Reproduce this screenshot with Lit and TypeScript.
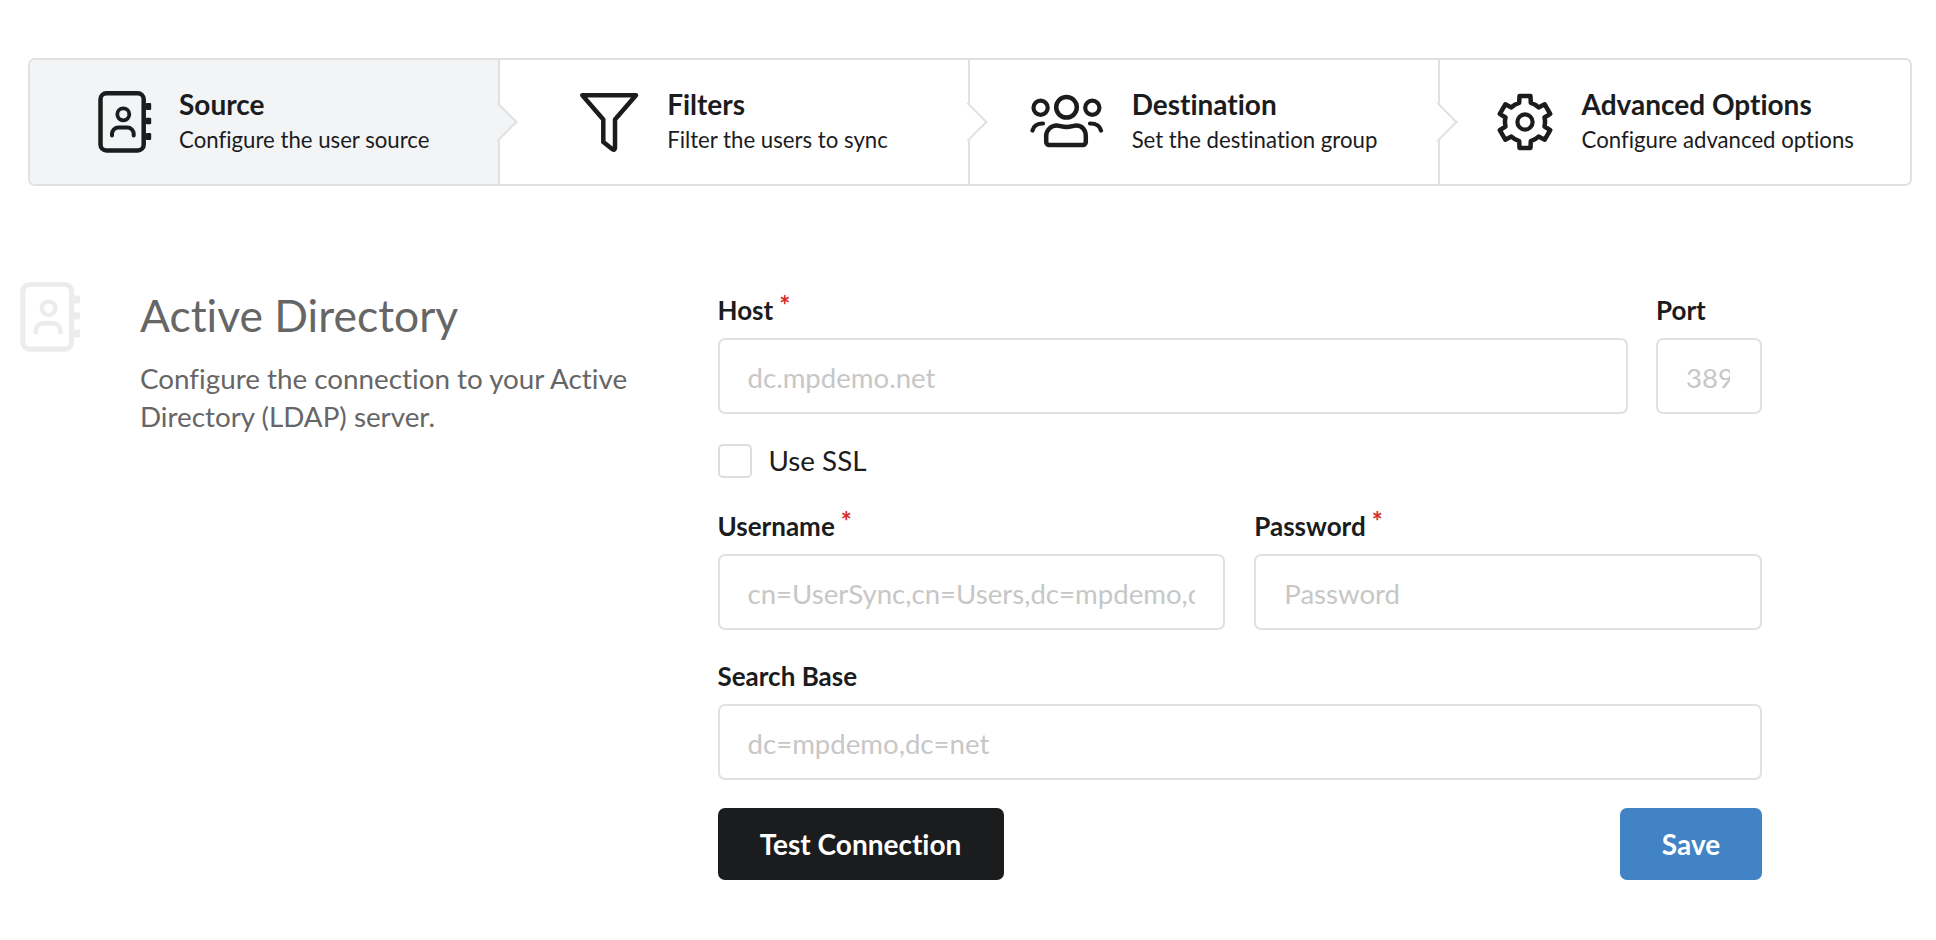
import { LitElement, html, css, svg } from "lit";
import { customElement } from "lit/decorators.js";

const gearPath = (() => {
  const cx = 29, cy = 30, R = 26.5, r = 20;
  const pts: string[] = [];
  for (let i = 0; i < 6; i++) {
    const a = -90 + i * 60;
    const p = (rad: number, deg: number) => {
      const t = (deg * Math.PI) / 180;
      return `${(cx + rad * Math.cos(t)).toFixed(1)} ${(cy + rad * Math.sin(t)).toFixed(1)}`;
    };
    pts.push(`${i === 0 ? "M" : "L"}${p(r, a - 17)}`, `L${p(R, a - 12)}`, `L${p(R, a + 12)}`, `L${p(r, a + 17)}`);
    pts.push(`A${r} ${r} 0 0 1 ${p(r, a + 43)}`);
  }
  return pts.join(" ") + " Z";
})();

const bookIcon = svg`
  <rect x="2.5" y="2.25" width="43.2" height="57.2" rx="6"/>
  <circle cx="25.3" cy="23.3" r="6" stroke-width="3.8"/>
  <path d="M14 44.5V43a6.5 6.5 0 0 1 6.5-6.5h8.7a6.5 6.5 0 0 1 6.5 6.5v1.5" stroke-width="4"/>
  <path d="M49 13.2h3v4.6h-3zM49 28h3v4h-3zM49 43.2h3v4.6h-3z" fill="currentColor" stroke-width="2.4"/>`;
const filterIcon = svg`<path d="M3.3 3.3H57L36 27.5V55Q36 59.5 32.5 56.5L24.3 50V27.5Z"/>`;
const usersIcon = svg`
  <circle cx="36.5" cy="13.3" r="10.3"/>
  <circle cx="10.6" cy="13.7" r="7.1" stroke-width="4.2"/>
  <circle cx="62.3" cy="13.7" r="7.1" stroke-width="4.2"/>
  <path d="M16.2 48V42c0-6 5-10.5 10.5-10.5 3 0 5 1.5 9.8 1.5s6.8-1.5 9.8-1.5C52 31.5 55.8 36 55.8 42v6a3 3 0 0 1-3 3H19.2a3 3 0 0 1-3-3Z"/>
  <path d="M2.5 36.5C3.5 32 7 29.5 13 29.5M71 36.5C70 32 66.5 29.5 60 29.5" stroke-width="4.2"/>`;
const gearIcon = svg`<path d=${gearPath}/><circle cx="29" cy="30" r="7.6" stroke-width="4.2"/>`;

const steps = [
  { title: "Source", desc: "Configure the user source", w: 54, h: 62, icon: bookIcon, active: true },
  { title: "Filters", desc: "Filter the users to sync", w: 60, h: 61, icon: filterIcon, active: false },
  { title: "Destination", desc: "Set the destination group", w: 74, h: 56, icon: usersIcon, active: false },
  { title: "Advanced Options", desc: "Configure advanced options", w: 58, h: 60, icon: gearIcon, active: false },
];

@customElement("app-root")
export class AppRoot extends LitElement {
  static styles = css`
    :host {
      display: block;
      min-height: 940px;
      box-sizing: border-box;
      padding: 58px 24px 0 28px;
      background: #fff;
      color: #1b1c1d;
      font-family: Lato, "Helvetica Neue", Arial, sans-serif;
      font-variant-ligatures: none;
    }
    * { box-sizing: border-box; }
    .steps {
      display: flex;
      height: 128px;
      border: 2px solid #e0e1e2;
      border-radius: 7px;
    }
    .step {
      position: relative;
      flex: 0 0 470px;
      display: flex;
      align-items: center;
      justify-content: center;
      gap: 28px;
      border-right: 2px solid #e0e1e2;
      background: #fff;
    }
    .step:first-child { flex-basis: 469.5px; border-radius: 5px 0 0 5px; gap: 27px; }
    .step:last-child { flex: 1 1 0; border-right: 0; border-radius: 0 5px 5px 0; }
    .step.active { background: #f3f4f5; }
    .step:not(:last-child)::after {
      content: "";
      position: absolute;
      z-index: 2;
      top: 50%;
      right: 0;
      width: 26px;
      height: 26px;
      background: inherit;
      border-style: solid;
      border-color: #e0e1e2;
      border-width: 0 2px 2px 0;
      transform: translate(50%, -50%) rotate(-45deg);
    }
    .icon {
      flex: none;
      fill: none;
      stroke: currentColor;
      stroke-width: 4.5;
      stroke-linejoin: round;
      stroke-linecap: round;
    }
    .text { display: flex; flex-direction: column; gap: 7px; padding-bottom: 1px; }
    .title { font-size: 28px; line-height: 30px; font-weight: 700; }
    .desc { font-size: 22.2px; line-height: 28px; }
    .main {
      display: flex;
      margin: 96px 0 0 -8px;
    }
    .side-icon { color: #ececec; margin-right: 59px; }
    .intro { width: 577.5px; flex: none; padding-right: 30px; }
    h2 {
      margin: 7px 0 0;
      font-size: 44.4px;
      line-height: 52px;
      font-weight: 400;
      color: #666;
    }
    .intro p {
      margin: 19px 0 0;
      font-size: 27.8px;
      line-height: 38px;
      color: #666;
    }
    form {
      width: 1044.5px;
      flex: none;
      padding-top: 11px;
      display: flex;
      flex-direction: column;
    }
    .row { display: flex; gap: 29px; }
    .row.tight { gap: 28px; }
    .field { display: flex; flex-direction: column; min-width: 0; }
    .grow { flex: 1 1 0; }
    .port { width: 106px; flex: none; }
    label.lbl {
      display: block;
      height: 34px;
      margin-bottom: 11px;
      font-size: 26px;
      line-height: 34px;
      font-weight: 700;
    }
    .req { color: #db2828; font-size: 26px; margin-left: 6px; position: relative; top: -5px; font-weight: 700; }
    input.txt {
      width: 100%;
      height: 76px;
      padding: 2px 28px 0;
      border: 2px solid #e0e1e2;
      border-radius: 7px;
      background: #fff;
      outline: none;
      font: 400 27.6px Lato, sans-serif;
      font-variant-ligatures: none;
      color: #1b1c1d;
    }
    .port input.txt { padding-right: 30px; }
    input.txt::placeholder { color: #c7c7c7; opacity: 1; }
    .check { display: flex; align-items: center; gap: 17px; margin: 30px 0 31px; font-size: 27.8px; line-height: 34px; }
    .box { width: 34px; height: 34px; border: 2px solid #dcddde; border-radius: 5px; background: #fff; }
    .mt { margin-top: 29px; }
    .actions { display: flex; justify-content: space-between; margin-top: 28px; }
    button {
      height: 72px;
      border: 0;
      border-radius: 7px;
      color: #fff;
      font: 700 28px Lato, sans-serif;
      font-variant-ligatures: none;
    }
    .dark { width: 286px; background: #1b1c1d; }
    .blue { width: 142px; background: #4183c4; }
  `;

  render() {
    return html`
      <div class="steps">
        ${steps.map(
          (s) => html`
            <div class="step ${s.active ? "active" : ""}">
              <svg class="icon" width=${s.w} height=${s.h} viewBox="0 0 ${s.w} ${s.h}">${s.icon}</svg>
              <div class="text">
                <div class="title">${s.title}</div>
                <div class="desc">${s.desc}</div>
              </div>
            </div>
          `
        )}
      </div>
      <div class="main">
        <svg class="icon side-icon" width="61" height="70" viewBox="0 0 54 62">${bookIcon}</svg>
        <div class="intro">
          <h2>Active Directory</h2>
          <p>Configure the connection to your Active Directory (LDAP) server.</p>
        </div>
        <form>
          <div class="row tight">
            <div class="field grow">
              <label class="lbl">Host<span class="req">*</span></label>
              <input class="txt" placeholder="dc.mpdemo.net" />
            </div>
            <div class="field port">
              <label class="lbl">Port</label>
              <input class="txt" placeholder="389" />
            </div>
          </div>
          <div class="check"><span class="box"></span><span>Use SSL</span></div>
          <div class="row">
            <div class="field grow">
              <label class="lbl">Username<span class="req">*</span></label>
              <input class="txt" placeholder="cn=UserSync,cn=Users,dc=mpdemo,dc=net" />
            </div>
            <div class="field grow">
              <label class="lbl">Password<span class="req">*</span></label>
              <input class="txt" placeholder="Password" />
            </div>
          </div>
          <div class="field mt">
            <label class="lbl">Search Base</label>
            <input class="txt" placeholder="dc=mpdemo,dc=net" />
          </div>
          <div class="actions">
            <button type="button" class="dark">Test Connection</button>
            <button type="button" class="blue">Save</button>
          </div>
        </form>
      </div>
    `;
  }
}
